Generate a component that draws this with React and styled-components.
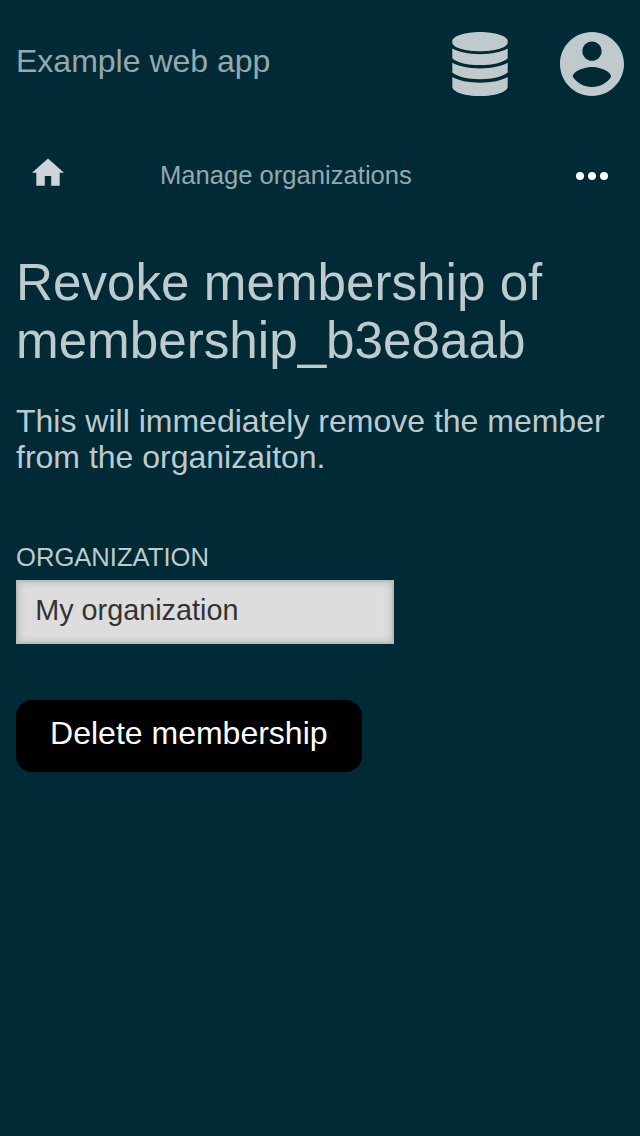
import React from "react";
import styled, { createGlobalStyle } from "styled-components";

const GlobalStyle = createGlobalStyle`
  * { box-sizing: border-box; }
  body {
    margin: 0;
    background: #002b36;
    color: #bfcacd;
    font-family: "Liberation Sans", Arial, sans-serif;
  }
`;

const Page = styled.div`
  min-height: 1136px;
  padding: 0 16px;
`;

const Header = styled.header`
  display: flex;
  align-items: center;
  height: 128px;
`;

const Brand = styled.div`
  flex: 1;
  font-size: 32px;
  line-height: 36px;
  padding-bottom: 6px;
  color: #96a8ad;
`;

const HeaderIcons = styled.div`
  display: flex;
  align-items: center;
  gap: 52px;
`;

const HeaderIcon = styled.svg`
  display: block;
  width: ${({ $width }) => $width}px;
  height: 64px;
  fill: #c0cacd;
`;

const Nav = styled.nav`
  display: flex;
  align-items: center;
  height: 96px;
  padding: 0 16px;
`;

const HomeIcon = styled.svg`
  display: block;
  width: 32px;
  height: 28px;
  margin-bottom: 8px;
  fill: #cdd5d8;
`;

const Crumb = styled.div`
  flex: 1;
  margin-left: 96px;
  padding-bottom: 2px;
  font-size: 25.6px;
  line-height: 30px;
  color: #96a8ad;
`;

const Dots = styled.svg`
  display: block;
  width: 32px;
  height: 8px;
  fill: #fff;
`;

const Title = styled.h1`
  margin: 30px 0 0;
  font-size: 51.2px;
  line-height: 58px;
  font-weight: 400;
`;

const Lead = styled.p`
  margin: 33px 0 0;
  font-size: 32px;
  line-height: 36px;
`;

const Label = styled.label`
  display: block;
  margin-top: 67px;
  font-size: 25.6px;
  line-height: 30px;
  text-transform: uppercase;
`;

const Input = styled.input`
  display: block;
  width: 378px;
  height: 64px;
  margin: 8px 0 0;
  padding: 0 17.2px 3px;
  border: 2px solid #bbb;
  border-radius: 0;
  background: #ddd;
  box-shadow: inset 0 0 8px #bbb;
  color: #333;
  font: 28.8px "Liberation Sans", Arial, sans-serif;
`;

const Button = styled.button`
  display: block;
  width: 346px;
  height: 72px;
  margin: 56px 0 0;
  padding: 0 0.4px 5px 0;
  border: 0;
  border-radius: 16px;
  background: #000;
  color: #fff;
  font: 32px "Liberation Sans", Arial, sans-serif;
`;

const DatabaseIcon = () => (
  <HeaderIcon $width={56} viewBox="0 0 56 64">
    <path d="M28 0C12.5 0 .3 4.2.3 9.2v1.2C.3 15.2 12.5 19.2 28 19.2s27.7-4 27.7-8.8V9.2C55.7 4.2 43.5 0 28 0Z" />
    <path d="M.3 16.6C6.2 20.1 16.2 22.2 28 22.2s21.8-2.1 27.7-5.6v9.8C50.5 30.6 40.3 33.1 28 33.1S5.5 30.6.3 26.4Z" />
    <path d="M.3 30.8C6.2 34.3 16.2 36.4 28 36.4s21.8-2.1 27.7-5.6v9.8C50.5 44.8 40.3 47.3 28 47.3S5.5 44.8.3 40.6Z" />
    <path d="M.3 45C6.2 48.5 16.2 50.7 28 50.7s21.8-2.2 27.7-5.7v9.4C55.7 59.8 43.5 64 28 64S.3 59.8.3 54.4Z" />
  </HeaderIcon>
);

const AccountIcon = () => (
  <HeaderIcon $width={64} viewBox="2 2 20 20">
    <path d="M12 2C6.48 2 2 6.48 2 12s4.48 10 10 10 10-4.48 10-10S17.52 2 12 2zm0 3c1.66 0 3 1.34 3 3s-1.34 3-3 3-3-1.34-3-3 1.34-3 3-3zm0 14.2c-2.5 0-4.71-1.28-6-3.22.03-1.99 4-3.08 6-3.08 1.99 0 5.97 1.09 6 3.08-1.29 1.94-3.5 3.22-6 3.22z" />
  </HeaderIcon>
);

export default function App() {
  return (
    <Page>
      <GlobalStyle />
      <Header>
        <Brand>Example web app</Brand>
        <HeaderIcons>
          <DatabaseIcon />
          <AccountIcon />
        </HeaderIcons>
      </Header>
      <Nav>
        <HomeIcon viewBox="0 0 32 28">
          <path d="M16 .4 32 14.8h-4.3v12.9h-8.5v-9.6h-6.4v9.6H4.3V14.8H0Z" />
        </HomeIcon>
        <Crumb>Manage organizations</Crumb>
        <Dots viewBox="0 0 32 8">
          <circle cx="4" cy="4" r="4" />
          <circle cx="16" cy="4" r="4" />
          <circle cx="28" cy="4" r="4" />
        </Dots>
      </Nav>
      <main>
        <Title>Revoke membership of membership_b3e8aab</Title>
        <Lead>This will immediately remove the member from the organizaiton.</Lead>
        <Label htmlFor="organization">Organization</Label>
        <Input id="organization" readOnly value="My organization" />
        <Button>Delete membership</Button>
      </main>
    </Page>
  );
}
